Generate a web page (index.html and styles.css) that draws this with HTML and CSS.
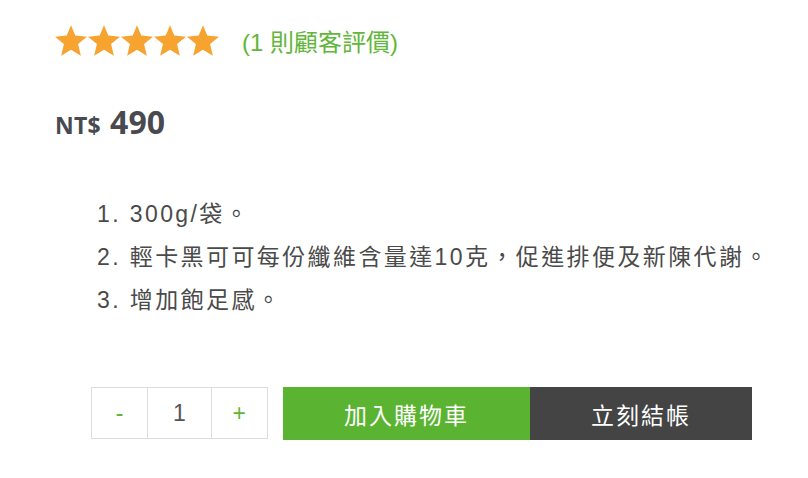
FILE: index.html
```html
<!DOCTYPE html>
<html lang="zh-Hant">
<head>
<meta charset="utf-8">
<title>Product</title>
<link rel="stylesheet" href="styles.css">
</head>
<body>
<div class="summary">
  <div class="rating">
    <div class="stars">
      <svg class="star" viewBox="0 0 24 23"><polygon points="12,0 15.2,7.7 24,8.6 17.3,14.2 19.4,23 12,18.4 4.6,23 6.7,14.2 0,8.6 8.8,7.7"/></svg>
      <svg class="star" viewBox="0 0 24 23"><polygon points="12,0 15.2,7.7 24,8.6 17.3,14.2 19.4,23 12,18.4 4.6,23 6.7,14.2 0,8.6 8.8,7.7"/></svg>
      <svg class="star" viewBox="0 0 24 23"><polygon points="12,0 15.2,7.7 24,8.6 17.3,14.2 19.4,23 12,18.4 4.6,23 6.7,14.2 0,8.6 8.8,7.7"/></svg>
      <svg class="star" viewBox="0 0 24 23"><polygon points="12,0 15.2,7.7 24,8.6 17.3,14.2 19.4,23 12,18.4 4.6,23 6.7,14.2 0,8.6 8.8,7.7"/></svg>
      <svg class="star" viewBox="0 0 24 23"><polygon points="12,0 15.2,7.7 24,8.6 17.3,14.2 19.4,23 12,18.4 4.6,23 6.7,14.2 0,8.6 8.8,7.7"/></svg>
    </div>
    <a class="review-link" href="#reviews">(1 則顧客評價)</a>
  </div>

  <p class="price"><span class="currency">NT$</span><span class="amount">490</span></p>

  <ol class="features">
    <li>300g/袋。</li>
    <li>輕卡黑可可每份纖維含量達10克，促進排便及新陳代謝。</li>
    <li>增加飽足感。</li>
  </ol>

  <form class="cart">
    <div class="qty">
      <button type="button" class="qty-btn">-</button>
      <span class="qty-val">1</span>
      <button type="button" class="qty-btn">+</button>
    </div>
    <button type="button" class="btn btn-add">加入購物車</button>
    <button type="button" class="btn btn-buy">立刻結帳</button>
  </form>
</div>
</body>
</html>
```

FILE: styles.css
```css
html, body {
  margin: 0;
  padding: 0;
  background: #ffffff;
}

body {
  font-family: "Liberation Sans", "Noto Sans CJK TC", sans-serif;
  color: #444444;
}

.summary {
  padding: 25px 0 0 55px;
}

.rating {
  display: flex;
  align-items: center;
  height: 31px;
}

.stars {
  display: flex;
  gap: 1px;
}

.star {
  width: 32px;
  height: 31px;
  display: block;
  fill: #f6a32f;
}

.review-link {
  margin-left: 23px;
  margin-top: 4px;
  font-size: 24px;
  line-height: 32px;
  color: #62b63a;
  text-decoration: none;
}

.price {
  margin: 47px 0 0 0;
  font-family: "Open Sans", "Liberation Sans", sans-serif;
  font-weight: 700;
  color: #484a50;
  line-height: 38px;
  display: flex;
  align-items: baseline;
}

.currency {
  font-size: 23px;
  letter-spacing: 0.3px;
}

.amount {
  font-size: 32px;
  margin-left: 9px;
}

.features {
  list-style: none;
  counter-reset: item;
  margin: 49px 0 0 42px;
  padding: 0;
  font-size: 23px;
  line-height: 43px;
  letter-spacing: 2.4px;
  color: #4a4a4a;
}

.features li {
  counter-increment: item;
}

.features li::before {
  content: counter(item) ". ";
}

.cart {
  display: flex;
  margin: 65px 0 0 36px;
  height: 53px;
}

.qty {
  display: flex;
  border: 1px solid #dddddd;
  box-sizing: border-box;
  height: 52px;
  width: 177px;
  margin-right: 15px;
}

.qty-btn {
  width: 56px;
  border: none;
  background: #ffffff;
  color: #5fb535;
  font-family: "Liberation Sans", sans-serif;
  font-size: 23px;
  padding: 0;
}

.qty-val {
  width: 63px;
  border-left: 1px solid #dddddd;
  border-right: 1px solid #dddddd;
  display: flex;
  align-items: center;
  justify-content: center;
  font-size: 23px;
  color: #555555;
}

.btn {
  border: none;
  padding: 0;
  height: 53px;
  font-family: "Liberation Sans", "Noto Sans CJK TC", sans-serif;
  font-size: 23px;
  letter-spacing: 2px;
  color: #ffffff;
}

.btn-add {
  width: 247px;
  background: #5ab431;
}

.btn-buy {
  width: 222px;
  background: #444444;
}
```
